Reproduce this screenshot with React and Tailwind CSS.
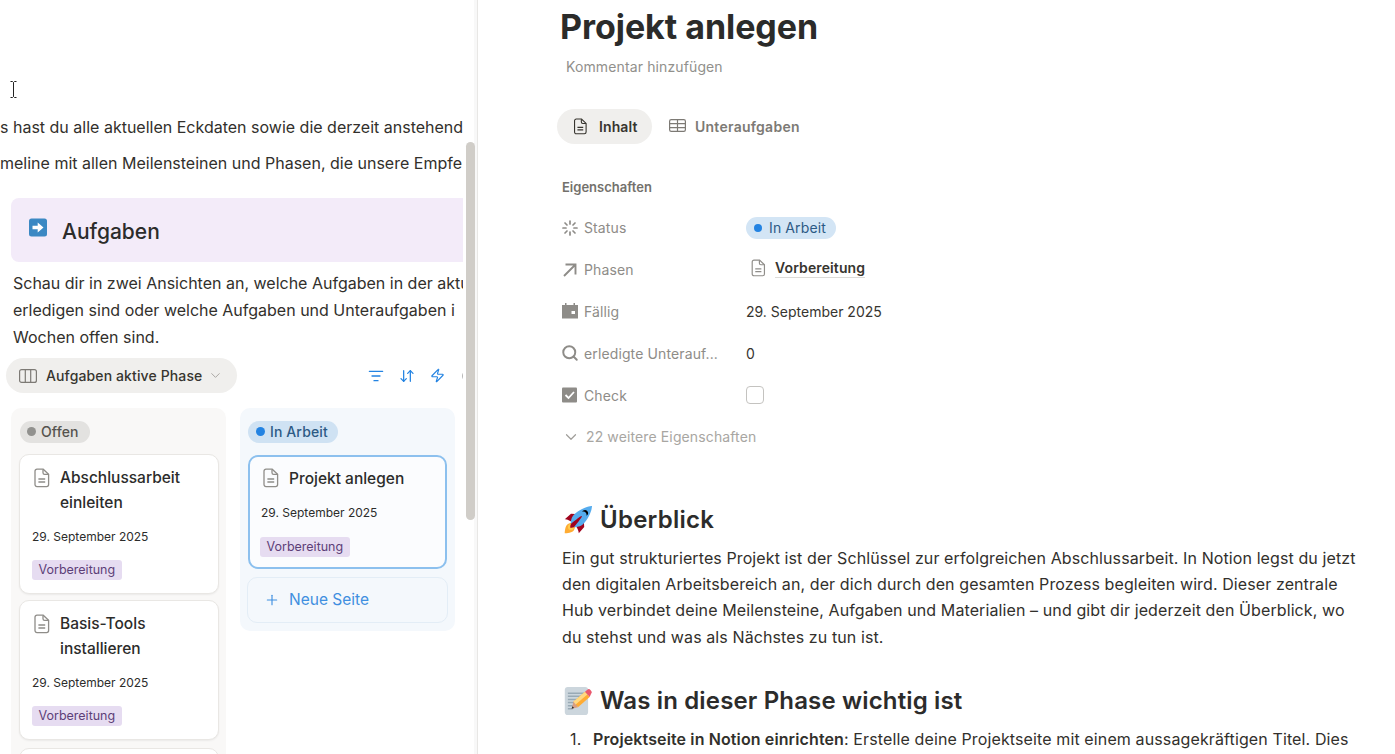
import { ChevronDown, Plus, Search, ArrowDownUp, Zap, ListFilter } from 'lucide-react'

function DocIcon({ className }) {
  return (
    <svg viewBox="0 0 16 20" fill="none" stroke="currentColor" strokeWidth="1.3" className={className}>
      <path d="M3 1.2h6.2L14.6 6.4v10.2a2 2 0 0 1-2 2H3a2 2 0 0 1-2-2V3.2a2 2 0 0 1 2-2z" />
      <path d="M9 1.4v3.4a1.6 1.6 0 0 0 1.6 1.6h3.8" />
      <path d="M4.4 11h6.8M4.4 14h6.8" />
    </svg>
  )
}

function Rocket() {
  return (
    <svg viewBox="0 0 36 36" className="w-[28px] h-[28px] shrink-0">
      <path fill="#A0041E" d="M1 17l8-7 16 1 1 16-7 8s.001-5.999-6-12-12-6-12-6z" />
      <path fill="#FFAC33" d="M.973 35s-.036-7.979 2.985-11S15 21.187 15 21.187 14.999 29 11.999 32c-3 3-11.026 3-11.026 3z" />
      <circle fill="#FFCC4D" cx="8.999" cy="27" r="4" />
      <path fill="#55ACEE" d="M35.999 0s-10 0-22 10c-6 5-6 14-4 16s11 2 16-4c10-12 10-22 10-22z" />
      <path d="M26.999 5c-1.623 0-3.013.971-3.641 2.36.502-.227 1.055-.36 1.641-.36 2.209 0 4 1.791 4 4 0 .586-.133 1.139-.359 1.64 1.389-.627 2.359-2.017 2.359-3.64 0-2.209-1.79-4-4-4z" fill="#000" />
      <path fill="#A0041E" d="M8 28s0-4 1-5 13.001-10.999 14-10-9.001 13-10.001 14S8 28 8 28z" />
    </svg>
  )
}

function Memo() {
  return (
    <svg viewBox="0 0 36 36" className="w-[28px] h-[28px] shrink-0">
      <rect x="1" y="0" width="30" height="36" rx="4" fill="#CCD6DD" />
      <path fill="#99AAB5" d="M5 7h22v2H5zM5 11h22v2H5zM5 15h22v2H5zM5 19h16v2H5zM5 23h12v2H5zM5 27h6v2H5z" />
      <path fill="#FFAC33" d="M12 19L27 6l6 7-15 13z" />
      <path fill="#FFD983" d="M12 19L27 6l3 3.5-15 13z" />
      <path fill="#D99E82" d="M12 19l6 7-8 2z" />
      <path fill="#292F33" d="M10.7 24.8l2.4 2.2-3.3.9z" />
      <path fill="#EA596E" d="M27 6l3-2.6a3 3 0 0 1 4 .4l1 1.2a3 3 0 0 1-.3 4L33 13z" />
    </svg>
  )
}

function Tag() {
  return (
    <span className="inline-block h-[20px] leading-[20px] px-[6.5px] rounded-[3px] bg-[#e6dcf1] text-[#5d3f78] text-[12.5px] tracking-normal">Vorbereitung</span>
  )
}

function Card({ title, height }) {
  return (
    <div className={`bg-white rounded-[10px] border border-[#e9e7e4] shadow-[0_1px_2px_rgba(0,0,0,0.06)] px-[12px] pt-[10px] ${height}`}>
      <div className="flex">
        <DocIcon className="w-[16px] h-[20px] ml-[2px] mt-[3px] text-[#8f8d89] shrink-0" />
        <div className="ml-[10px] text-[15.5px] leading-[25px] tracking-normal font-medium text-[#2c2c2b] w-[150px]">{title}</div>
      </div>
      <div className="mt-[13px] text-[12px] leading-[18px] tracking-normal text-[#2c2c2b]">29. September 2025</div>
      <div className="mt-[10px]"><Tag /></div>
    </div>
  )
}

function PropRow({ icon, label, children }) {
  return (
    <div className="flex items-center h-[41.8px]">
      <div className="w-[184px] flex items-center text-[14px] text-[#8e8c88] shrink-0">
        <span className="w-[16px] h-[16px] flex items-center justify-center shrink-0 mr-[6px]">{icon}</span>
        {label}
      </div>
      <div className="text-[14px] text-[#373530] flex items-center tracking-normal">{children}</div>
    </div>
  )
}

function LeftPanel() {
  return (
    <div className="relative w-[478px] h-[754px] shrink-0 overflow-hidden border-r border-[#e8e7e5] bg-white">
      <div className="w-[463px] h-full overflow-hidden pt-[115px]">
        <div className="text-[16px] leading-[24px] tracking-normal text-[#32302c] whitespace-nowrap overflow-hidden">s hast du alle aktuellen Eckdaten sowie die derzeit anstehend</div>
        <div className="mt-[12px] text-[16px] leading-[24px] tracking-normal text-[#32302c] whitespace-nowrap overflow-hidden">meline mit allen Meilensteinen und Phasen, die unsere Empfe</div>

        <div className="ml-[11px] mt-[23px] h-[64px] rounded-l-[8px] bg-[#f3ebf9] flex items-center">
          <svg viewBox="0 0 18 18" className="w-[18px] h-[19px] ml-[18px] -mt-[5px] shrink-0">
            <rect width="18" height="18" rx="2.5" fill="#3b88c3" />
            <path fill="#fff" d="M3.5 7.2h5.2V4l5.8 5-5.8 5v-3.2H3.5z" />
          </svg>
          <span className="ml-[15px] mt-[3px] text-[21px] font-medium tracking-normal text-[#2c2c2b]">Aufgaben</span>
        </div>

        <div className="ml-[13px] mt-[8px] text-[16px] leading-[27px] tracking-normal text-[#32302c]">
          <div className="whitespace-nowrap overflow-hidden">Schau dir in zwei Ansichten an, welche Aufgaben in der aktu</div>
          <div className="whitespace-nowrap overflow-hidden">erledigen sind oder welche Aufgaben und Unteraufgaben i</div>
          <div className="whitespace-nowrap">Wochen offen sind.</div>
        </div>

        <div className="flex items-center ml-[6px] mt-[7px]">
          <div className="w-[231px] h-[35px] rounded-full bg-[#f0efed] flex items-center pl-[13px] shrink-0">
            <svg viewBox="0 0 18 14" className="w-[18px] h-[14px] text-[#7d7a75]" fill="none" stroke="currentColor" strokeWidth="1.2">
              <rect x="0.6" y="0.6" width="16.8" height="12.8" rx="2" />
              <path d="M6.3 0.6v12.8M11.7 0.6v12.8" />
            </svg>
            <span className="ml-[9px] text-[14px] font-medium text-[#37352f] whitespace-nowrap">Aufgaben aktive Phase</span>
            <ChevronDown className="w-[15px] h-[15px] ml-[6px] text-[#a5a29e]" strokeWidth={1.5} />
          </div>
          <div className="flex items-center text-[#2383e2] ml-[131px] gap-[15px]">
            <ListFilter className="w-[16px] h-[16px] shrink-0" strokeWidth={1.9} />
            <ArrowDownUp className="w-[16px] h-[16px] shrink-0" strokeWidth={1.9} />
            <Zap className="w-[15px] h-[15px] shrink-0" strokeWidth={1.9} />
            <span className="w-[12px] h-[12px] rounded-full border-[1.5px] border-[#b4b4b4] shrink-0 ml-[2px]" />
          </div>
        </div>

        <div className="flex items-start mt-[15px] ml-[11px] gap-[14px]">
          <div className="w-[215px] h-[400px] shrink-0 rounded-t-[10px] bg-[#f9f8f7] pl-[8px] pr-[7px] pt-[10px]">
            <div className="inline-flex items-center h-[22px] rounded-full bg-[#e3e2e0] pl-[7px] pr-[11px] ml-[1px] text-[14px] font-medium text-[#55534e]">
              <span className="w-[9px] h-[9px] rounded-full bg-[#91918e] mr-[5px]" />
              Offen
            </div>
            <div className="mt-[11px] flex flex-col gap-[6px]">
              <Card title="Abschlussarbeit einleiten" height="h-[140px]" />
              <Card title="Basis-Tools installieren" height="h-[140px]" />
              <div className="h-[40px] bg-white rounded-[10px] border border-[#e9e7e4] mt-[2px]" />
            </div>
          </div>

          <div className="w-[215px] shrink-0 rounded-[10px] bg-[#f4f8fc] px-[8px] pt-[10px] pb-[8px]">
            <div className="inline-flex items-center h-[22px] rounded-full bg-[#cfe2f3] pl-[8px] pr-[10px] text-[14px] font-medium text-[#2c5a85]">
              <span className="w-[9px] h-[9px] rounded-full bg-[#2383e2] mr-[5px]" />
              In Arbeit
            </div>
            <div className="mt-[12px] h-[114px] rounded-[10px] border-2 border-[#8cc0ee] bg-[#fbfcfe] px-[11px] pt-[9px]">
              <div className="flex">
                <DocIcon className="w-[16px] h-[20px] ml-[2px] mt-[2px] text-[#8f8d89] shrink-0" />
                <div className="ml-[10px] text-[15.5px] leading-[25px] tracking-normal font-medium text-[#2c2c2b]">Projekt anlegen</div>
              </div>
              <div className="mt-[13px] text-[12px] leading-[18px] tracking-normal text-[#2c2c2b]">29. September 2025</div>
              <div className="mt-[11px] -ml-[1px]"><Tag /></div>
            </div>
            <div className="mt-[8px] -mx-[1px] h-[46px] rounded-[10px] border border-[#e3edf6] flex items-center pl-[16px] text-[#3f8fe0]">
              <Plus className="w-[16px] h-[16px]" strokeWidth={1.7} />
              <span className="ml-[9px] text-[15.5px] tracking-normal">Neue Seite</span>
            </div>
          </div>
        </div>
      </div>
      {/* scrollbar sits over the page */}
      <div className="absolute right-0 top-0 bottom-0 w-[3px] bg-[#f8f8f8]" />
      <div className="absolute left-[466px] top-[142px] w-[9px] h-[378px] rounded-full bg-[#d0cdc8]" />
      {/* text cursor */}
      <svg viewBox="0 0 8 17" className="absolute left-[10px] top-[81px] w-[8px] h-[17px]" fill="none" stroke="#222" strokeWidth="1">
        <path d="M0.5 0.5h2l1 1 1-1h2M3.5 1.5v14M0.5 16.5h2l1-1 1 1h2" />
      </svg>
    </div>
  )
}

function RightPanel() {
  return (
    <div className="flex-1 h-[754px] overflow-hidden bg-white pl-[82px] text-[#32302c]">
      <h1 className="text-[34px] leading-[44px] font-bold mt-[5px] text-[#2b2b2a] tracking-[-0.05px]">Projekt anlegen</h1>
      <div className="ml-[6px] mt-[8px] text-[14px] leading-[20px] text-[#91908c]">Kommentar hinzufügen</div>

      <div className="flex items-center mt-[32px] -ml-[3px]">
        <div className="h-[35px] w-[95px] rounded-full bg-[#f0efed] flex items-center pl-[16px] text-[14px] font-semibold text-[#37352f]">
          <DocIcon className="w-[15px] h-[17px] text-[#37352f] mr-[11px]" />
          Inhalt
        </div>
        <div className="flex items-center ml-[17px] text-[14px] font-semibold tracking-[0.25px] text-[#7d7a75]">
          <svg viewBox="0 0 17 13" className="w-[17px] h-[13px] mr-[9px] -mt-[2px]" fill="none" stroke="currentColor" strokeWidth="1.2">
            <rect x="0.6" y="0.6" width="15.8" height="11.8" rx="1.6" />
            <path d="M0.6 4.6h15.8M0.6 8.6h15.8M8.5 0.6v11.8" />
          </svg>
          Unteraufgaben
        </div>
      </div>

      <div className="ml-[2px] mt-[34px] text-[13px] font-semibold leading-[18px] tracking-normal text-[#73716c]">Eigenschaften</div>

      <div className="ml-[2px] mt-[11px]">
        <PropRow
          label="Status"
          icon={
            <svg viewBox="0 0 16 16" className="w-[16px] h-[16px] shrink-0" fill="none" stroke="#8e8c88" strokeWidth="1.7" strokeLinecap="round">
              <path d="M8 1v3M8 12v3M1 8h3M12 8h3M3 3l2 2M11 11l2 2M3 13l2-2M11 5l2-2" />
            </svg>
          }
        >
          <span className="inline-flex items-center h-[22px] rounded-full bg-[#d3e5f5] pl-[8px] pr-[10px] text-[#2c5a85] tracking-[0.12px]">
            <span className="w-[8px] h-[8px] rounded-full bg-[#2383e2] mr-[7px]" />
            In Arbeit
          </span>
        </PropRow>
        <PropRow
          label="Phasen"
          icon={
            <svg viewBox="0 0 16 16" className="w-[16px] h-[16px] shrink-0" fill="none" stroke="#8e8c88" strokeWidth="1.9">
              <path d="M2 14L13.5 2.5M3.5 2.5h10v10" />
            </svg>
          }
        >
          <span className="flex items-center -mt-[3px] ml-[5px]">
            <DocIcon className="w-[15px] h-[18px] text-[#8f8d89] mr-[9px]" />
            <span className="font-semibold text-[#37352f] border-b border-[#dcdbd8] leading-[19px] tracking-[0.12px]">Vorbereitung</span>
          </span>
        </PropRow>
        <PropRow
          label="Fällig"
          icon={
            <svg viewBox="0 0 16 16" className="w-[16px] h-[16px] shrink-0" fill="#8e8c88">
              <path fillRule="evenodd" d="M3 0h1.5v2h7V0H13v2h3v13.5H0V2h3zM9.5 8v3H13V8z" />
            </svg>
          }
        >
          29. September 2025
        </PropRow>
        <PropRow label="erledigte Unterauf..." icon={<Search className="w-[18px] h-[18px] shrink-0 text-[#8e8c88]" strokeWidth={2.6} />}>0</PropRow>
        <PropRow
          label="Check"
          icon={
            <svg viewBox="0 0 16 16" className="w-[16px] h-[16px] shrink-0">
              <rect width="15" height="15" y="0.5" rx="1" fill="#8e8c88" />
              <path d="M3.5 8l3 3 5.5-6" fill="none" stroke="#fff" strokeWidth="1.8" />
            </svg>
          }
        >
          <span className="w-[18px] h-[18px] rounded-[4px] border border-[#c4c3c0] bg-white" />
        </PropRow>
        <div className="flex items-center h-[41.8px] text-[14px] text-[#a8a6a2]">
          <ChevronDown className="w-[18px] h-[18px] mr-[6px] text-[#a09e9a]" strokeWidth={1.6} />
          22 weitere Eigenschaften
        </div>
      </div>

      <div className="ml-[2px]">
        <h2 className="flex items-center mt-[44px] ml-[2px] text-[24px] leading-[36px] font-semibold text-[#2c2c2b] tracking-[0.25px]">
          <Rocket />
          <span className="ml-[8px]">Überblick</span>
        </h2>
        <p className="mt-[7px] text-[16px] leading-[26.3px] tracking-[0.1px] w-[800px]">
          Ein gut strukturiertes Projekt ist der Schlüssel zur erfolgreichen Abschlussarbeit. In Notion legst du jetzt den digitalen Arbeitsbereich an, der dich durch den gesamten Prozess begleiten wird. Dieser zentrale Hub verbindet deine Meilensteine, Aufgaben und Materialien – und gibt dir jederzeit den Überblick, wo du stehst und was als Nächstes zu tun ist.
        </p>
        <h2 className="flex items-center mt-[33px] ml-[2px] text-[24px] leading-[36px] font-semibold text-[#2c2c2b] tracking-[0.15px]">
          <Memo />
          <span className="ml-[8px]">Was in dieser Phase wichtig ist</span>
        </h2>
        <div className="flex mt-[7px] text-[16px] leading-[26px] whitespace-nowrap">
          <span className="w-[31px] pl-[8px] shrink-0">1.</span>
          <span><span className="font-semibold">Projektseite in Notion einrichten</span>: Erstelle deine Projektseite mit einem aussagekräftigen Titel. Dies</span>
        </div>
      </div>
    </div>
  )
}

export default function App() {
  return (
    <div className="flex w-[1395px] h-[754px] overflow-hidden bg-white font-['Inter',sans-serif] tracking-[0.12px]">
      <LeftPanel />
      <RightPanel />
    </div>
  )
}
